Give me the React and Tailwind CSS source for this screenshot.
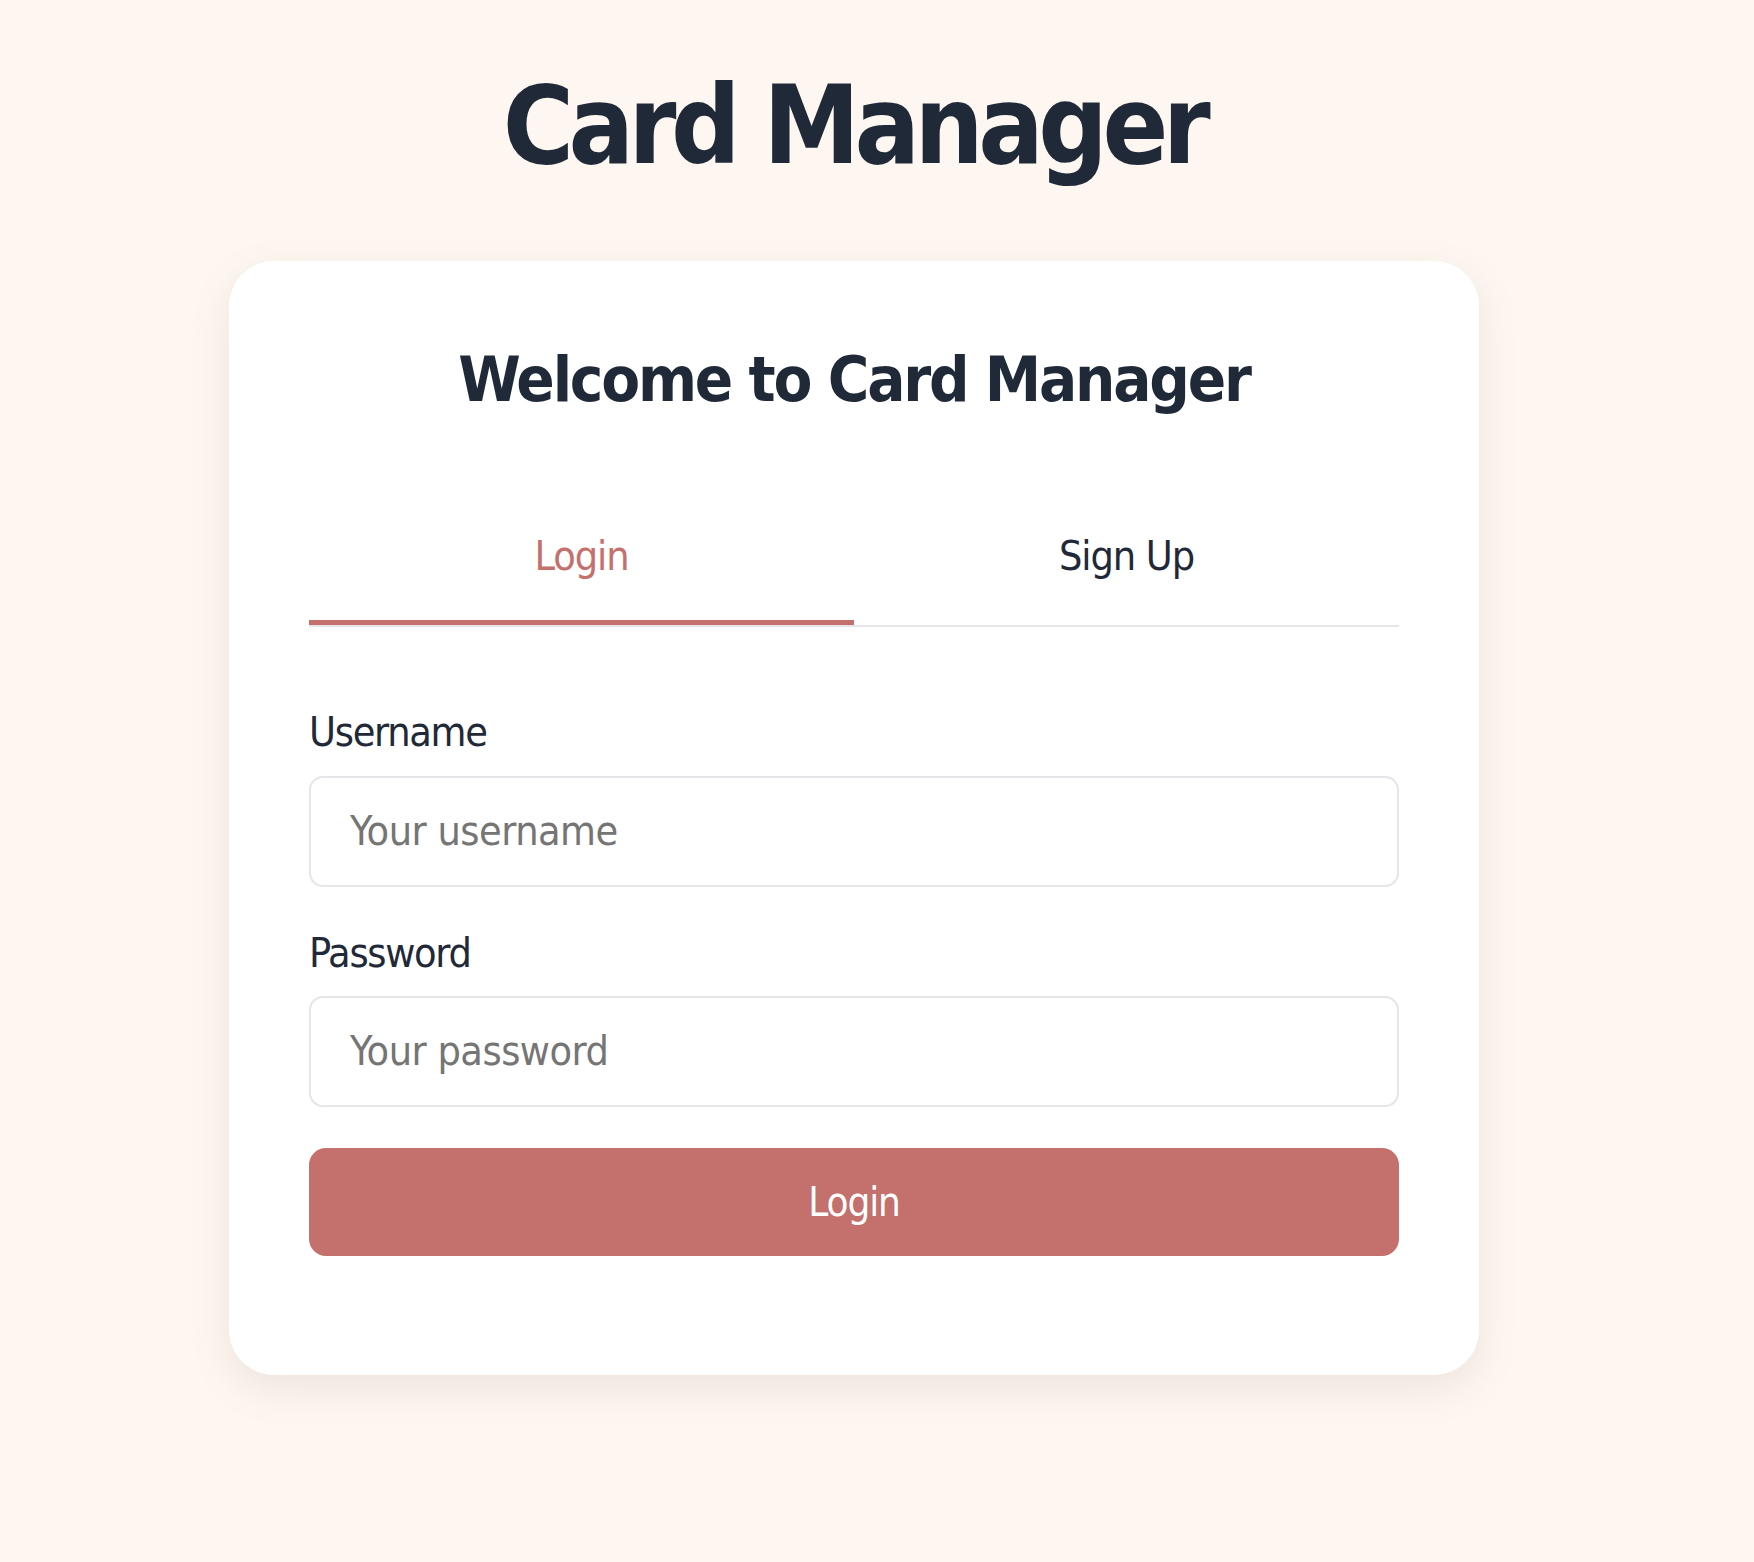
import React, { useState } from "react";

export default function App() {
  const [tab, setTab] = useState("login");
  const [username, setUsername] = useState("");
  const [password, setPassword] = useState("");

  return (
    <div className="min-h-screen bg-[#fef7f1] pr-[46px] pt-[61px] font-['DejaVu_Sans_Condensed','DejaVu_Sans',sans-serif] font-stretch-condensed text-[#1f2937]">
      <div className="flex flex-col items-center">
        <h1 className="text-[108px] font-bold leading-[1.2] tracking-[-5.5px]">Card Manager</h1>

        {/* Card */}
        <div className="mt-[70px] w-[1250px] rounded-[45px] bg-white px-[80px] pt-[81px] pb-[119px] shadow-[0_14px_40px_rgba(110,90,70,0.12)]">
          <h2 className="text-center text-[63px] font-bold leading-[1.2] tracking-[-2.2px]">Welcome to Card Manager</h2>

          {/* Tabs */}
          <div className="mt-[76px] flex border-b-2 border-[#e5e5ea]">
            <button
              onClick={() => setTab("login")}
              className={`flex-1 border-b-[5px] pt-[39px] pb-[39px] text-[41px] leading-[1.2] tracking-[-1.1px] ${
                tab === "login" ? "border-[#c4706d] text-[#c4706d]" : "border-transparent text-[#1f2937]"
              }`}
            >
              Login
            </button>
            <button
              onClick={() => setTab("signup")}
              className={`flex-1 border-b-[5px] pt-[39px] pb-[39px] text-[41px] leading-[1.2] tracking-[-1.1px] ${
                tab === "signup" ? "border-[#c4706d] text-[#c4706d]" : "border-transparent text-[#1f2937]"
              }`}
            >
              Sign Up
            </button>
          </div>

          {/* Form */}
          <form className="mt-[81px] flex flex-col" onSubmit={(e) => e.preventDefault()}>
            <label className="text-[41px] leading-[1.2] tracking-[-1.3px]">Username</label>
            <input
              type="text"
              placeholder="Your username"
              value={username}
              onChange={(e) => setUsername(e.target.value)}
              className="mt-[18px] h-[111px] w-full rounded-[14px] border-2 border-[#e5e5ea] px-[39px] text-[41px] tracking-[-0.5px] placeholder:text-[#757575] focus:outline-none"
            />

            <label className="mt-[42px] text-[41px] leading-[1.2] tracking-[-1.3px]">Password</label>
            <input
              type="password"
              placeholder="Your password"
              value={password}
              onChange={(e) => setPassword(e.target.value)}
              className="mt-[18px] h-[111px] w-full rounded-[14px] border-2 border-[#e5e5ea] px-[39px] text-[41px] tracking-[-0.5px] placeholder:text-[#757575] focus:outline-none"
            />

            <button
              type="submit"
              className="mt-[41px] h-[108px] w-full rounded-[17px] bg-[#c4706d] text-[40px] tracking-[-1.1px] text-white"
            >
              {tab === "login" ? "Login" : "Sign Up"}
            </button>
          </form>
        </div>
      </div>
    </div>
  );
}
